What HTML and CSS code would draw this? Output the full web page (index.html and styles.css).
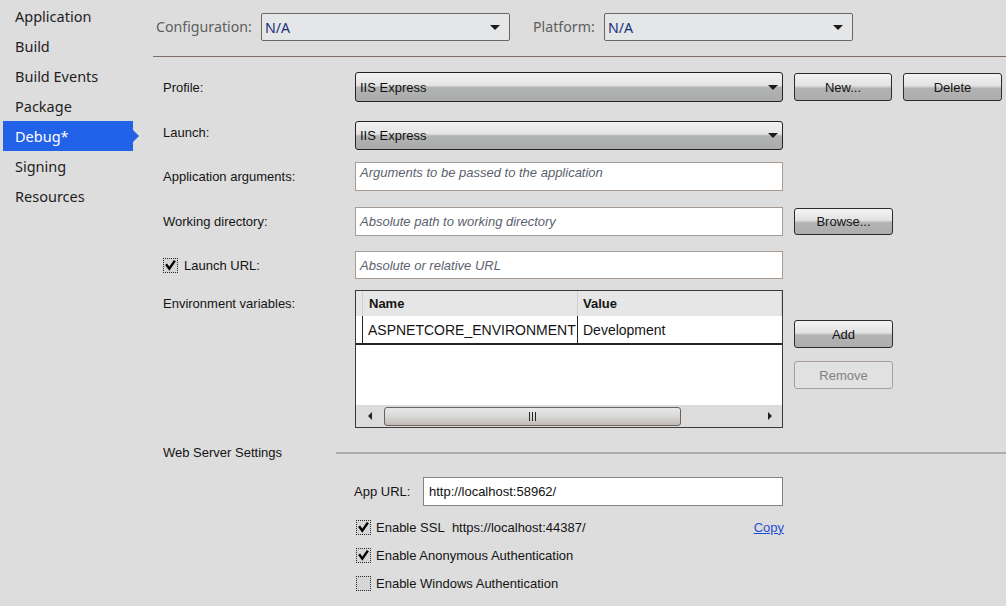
FILE: index.html
```html
<!DOCTYPE html>
<html>
<head>
<meta charset="utf-8">
<title>Debug</title>
<link rel="stylesheet" href="styles.css">
</head>
<body>
<div class="app">
  <nav class="nav">
    <div class="nav-item">Application</div>
    <div class="nav-item">Build</div>
    <div class="nav-item">Build Events</div>
    <div class="nav-item">Package</div>
    <div class="nav-item active">Debug*</div>
    <div class="nav-item">Signing</div>
    <div class="nav-item">Resources</div>
  </nav>
  <main class="main">
    <div class="topbar">
      <span class="top-label">Configuration:</span>
      <div class="top-combo"><span>N/A</span><span class="arrow"></span></div>
      <span class="top-label plat">Platform:</span>
      <div class="top-combo"><span>N/A</span><span class="arrow"></span></div>
    </div>

    <div class="form">
      <div class="row r-profile">
        <div class="label">Profile:</div>
        <div class="combo"><span>IIS Express</span><span class="arrow"></span></div>
        <button class="btn btn-new">New...</button>
        <button class="btn btn-delete">Delete</button>
      </div>

      <div class="row r-launch">
        <div class="label lbl-top">Launch:</div>
        <div class="combo"><span>IIS Express</span><span class="arrow"></span></div>
      </div>

      <div class="row r-args">
        <div class="label">Application arguments:</div>
        <div class="textbox tb-top"><span class="ph">Arguments to be passed to the application</span></div>
      </div>

      <div class="row r-wd">
        <div class="label">Working directory:</div>
        <div class="textbox"><span class="ph">Absolute path to working directory</span></div>
        <button class="btn">Browse...</button>
      </div>

      <div class="row r-url">
        <div class="label"><span class="cb checked"><svg viewBox="0 0 13 13"><path d="M2.8 6.2 L5.3 9.6 L10.2 2.6" /></svg></span><span class="cb-text">Launch URL:</span></div>
        <div class="textbox"><span class="ph">Absolute or relative URL</span></div>
      </div>

      <div class="row r-env">
        <div class="label lbl-env">Environment variables:</div>
        <div class="grid">
          <div class="grid-head">
            <div class="rh"></div>
            <div class="gc c-name">Name</div>
            <div class="gc c-val">Value</div>
          </div>
          <div class="grid-row">
            <div class="rh"></div>
            <div class="gc c-name">ASPNETCORE_ENVIRONMENT</div>
            <div class="gc c-val">Development</div>
          </div>
          <div class="grid-empty"></div>
          <div class="hscroll">
            <span class="sarrow left"></span>
            <div class="track">
              <div class="thumb"><span class="grip"></span></div>
            </div>
            <span class="sarrow right"></span>
          </div>
        </div>
        <div class="env-btns">
          <button class="btn">Add</button>
          <button class="btn disabled">Remove</button>
        </div>
      </div>

      <div class="row r-ws">
        <div class="ws-label">Web Server Settings</div>
        <div class="ws-line"></div>
      </div>

      <div class="row r-appurl">
        <div class="appurl-label">App URL:</div>
        <div class="textbox tb-url"><span class="val">http://localhost:58962/</span></div>
      </div>

      <div class="row r-cb">
        <span class="cb checked"><svg viewBox="0 0 13 13"><path d="M2.8 6.2 L5.3 9.6 L10.2 2.6" /></svg></span>
        <span class="cb-text">Enable SSL&nbsp; https://localhost:44387/</span>
        <a class="copy" href="#">Copy</a>
      </div>
      <div class="row r-cb">
        <span class="cb checked"><svg viewBox="0 0 13 13"><path d="M2.8 6.2 L5.3 9.6 L10.2 2.6" /></svg></span>
        <span class="cb-text">Enable Anonymous Authentication</span>
      </div>
      <div class="row r-cb">
        <span class="cb"></span>
        <span class="cb-text">Enable Windows Authentication</span>
      </div>
    </div>
  </main>
</div>
</body>
</html>
```

FILE: styles.css
```css
* { box-sizing: border-box; }
html, body { margin: 0; padding: 0; }
body {
  width: 1006px;
  height: 606px;
  overflow: hidden;
  background: #dddddd;
  font-family: "Liberation Sans", Arial, sans-serif;
  font-size: 13px;
  color: #141414;
}
.app { display: flex; height: 606px; }

/* nav */
.nav {
  width: 138px;
  flex: none;
  padding-top: 1px;
  font-family: "Noto Sans", "Open Sans", sans-serif;
  font-size: 14.5px;
  color: #1e1e1e;
}
.nav-item {
  height: 30px;
  line-height: 30px;
  padding-left: 15px;
  position: relative;
}
.nav-item.active {
  margin-left: 3px;
  width: 130px;
  padding-left: 12px;
  background: #2162e8;
  color: #fff;
}
.nav-item.active::after {
  content: "";
  position: absolute;
  right: -6px;
  top: 9px;
  border-left: 6px solid #2162e8;
  border-top: 6px solid transparent;
  border-bottom: 6px solid transparent;
}

/* main */
.main { flex: 1; min-width: 0; }
.topbar {
  margin-left: 15px;
  height: 57px;
  border-bottom: 1px solid #7d6f68;
  display: flex;
  align-items: flex-start;
  padding-top: 13px;
  padding-left: 3px;
  font-family: "Noto Sans", "Open Sans", sans-serif;
  font-size: 14.2px;
}
.top-label {
  color: #5e5e5e;
  height: 28px;
  line-height: 28px;
  width: 105px;
}
.top-label.plat { margin-left: 23px; width: 71px; }
.top-combo {
  width: 249px;
  height: 28px;
  border: 1px solid #6f6560;
  border-radius: 2px;
  background: #e5e6e8;
  display: flex;
  align-items: center;
  justify-content: space-between;
  padding: 0 9px 0 3px;
  color: #17327a;
}
.arrow {
  width: 0; height: 0;
  border-left: 5px solid transparent;
  border-right: 5px solid transparent;
  border-top: 5px solid #1a1a1a;
}

/* form */
.form { padding-left: 25px; }
.row { display: flex; align-items: center; }
.label { width: 192px; flex: none; display: flex; align-items: center; }

.r-profile { margin-top: 15px; height: 30px; }
.r-launch { margin-top: 19px; height: 29px; align-items: flex-start; }
.r-launch .label { padding-top: 4px; }
.r-args { margin-top: 12px; height: 29px; }
.r-wd { margin-top: 16px; height: 29px; }
.r-url { margin-top: 15px; height: 28px; }
.r-env { margin-top: 11px; height: 138px; align-items: flex-start; }
.lbl-env { padding-top: 6px; }

.combo {
  width: 428px;
  height: 100%;
  border: 1px solid #232323;
  border-radius: 3px;
  background: linear-gradient(#f2f2f2 0%, #e4e4e4 44%, #b2b3b3 52%, #a9aaaa 100%);
  display: flex;
  align-items: center;
  justify-content: space-between;
  padding: 0 4px 0 4px;
  color: #111;
}

.btn {
  font-family: "Liberation Sans", Arial, sans-serif;
  font-size: 13px;
  color: #141414;
  height: 28px;
  width: 99px;
  margin-left: 11px;
  border: 1px solid #2b2b2b;
  border-radius: 3px;
  background: linear-gradient(#f4f4f4 0%, #e2e2e2 45%, #b3b3b3 55%, #adadad 100%);
  padding: 0;
  flex: none;
}
.btn-new { width: 98px; }
.btn-delete { margin-left: 11px; }
.btn.disabled {
  border-color: #a99f98;
  color: #808080;
  background: #e1e1e1;
}
.r-wd .btn { height: 27px; }

.textbox {
  width: 428px;
  height: 100%;
  background: #fff;
  border: 1px solid #a79c93;
  display: flex;
  align-items: center;
  padding-left: 4px;
}
.tb-top { align-items: flex-start; padding-top: 2px; }
.ph { font-style: italic; color: #5b5f6e; }

.cb {
  width: 15px; height: 15px;
  flex: none;
  border: 1px dotted #2a2a2a;
  background: #d6d6d6;
  display: inline-flex;
  align-items: center;
  justify-content: center;
}
.cb svg { width: 13px; height: 13px; }
.cb svg path { fill: none; stroke: #000; stroke-width: 2.4; stroke-linecap: square; }
.cb-text { margin-left: 6px; }

/* grid */
.grid {
  width: 428px;
  height: 138px;
  border: 1px solid #3a3a3a;
  background: #fff;
  display: flex;
  flex-direction: column;
}
.grid-head {
  height: 25px;
  display: flex;
  background: #e6e6e6;
  font-weight: bold;
}
.grid-head .gc { border-right: 1px solid #cfcfcf; }
.grid-head .rh { border-right: 1px solid #cfcfcf; }
.rh { width: 7px; flex: none; }
.gc {
  display: flex;
  align-items: center;
  padding-left: 6px;
  height: 100%;
}
.c-name { width: 215px; flex: none; }
.c-val { flex: 1; padding-left: 5px; }
.grid-row {
  height: 29px;
  display: flex;
  border-bottom: 2px solid #262626;
  font-size: 14px;
}
.grid-row .rh { border-right: 1px solid #262626; background: #fff; }
.grid-row .c-name { border-right: 1px solid #262626; padding-left: 5px; }
.grid-empty { flex: 1; }
.hscroll {
  height: 22px;
  background: #dcdcdc;
  display: flex;
  align-items: center;
  padding: 0 6px 0 6px;
}
.sarrow { width: 0; height: 0; border-top: 4px solid transparent; border-bottom: 4px solid transparent; flex: none; }
.sarrow.left { border-right: 4px solid #222; margin-left: 6px; }
.sarrow.right { border-left: 4px solid #222; margin-right: 4px; }
.track { flex: 1; height: 100%; display: flex; align-items: center; padding-left: 12px; }
.thumb {
  width: 297px;
  height: 19px;
  border: 1px solid #6b625d;
  border-radius: 3px;
  background: linear-gradient(#e8e8e8 0%, #d8d8d8 50%, #c0bab6 100%);
  display: flex;
  align-items: center;
  justify-content: center;
}
.grip {
  width: 7px; height: 9px;
  border-left: 1px solid #222;
  border-right: 1px solid #222;
  position: relative;
}
.grip::after { content: ""; position: absolute; left: 2px; top: 0; width: 1px; height: 9px; background: #222; }

.env-btns { display: flex; flex-direction: column; padding-top: 30px; }
.env-btns .btn + .btn { margin-top: 13px; }

/* web server */
.r-ws { margin-top: 15px; height: 18px; }
.ws-label { width: 173px; flex: none; }
.ws-line { flex: 1; height: 2px; background: #acacac; margin-top: 1px; }
.r-appurl { margin-top: 16px; height: 29px; padding-left: 191px; }
.appurl-label { width: 69px; flex: none; }
.tb-url { width: 360px; border-color: #8a817b; padding-left: 5px; }
.val { color: #111; }
.r-cb { height: 28px; padding-left: 193px; }
.r-appurl + .r-cb { margin-top: 7px; }
.r-cb .cb-text { margin-left: 5px; }
.copy {
  color: #1f4fd6;
  text-decoration: underline;
  margin-left: auto;
  margin-right: 222px;
}
```
